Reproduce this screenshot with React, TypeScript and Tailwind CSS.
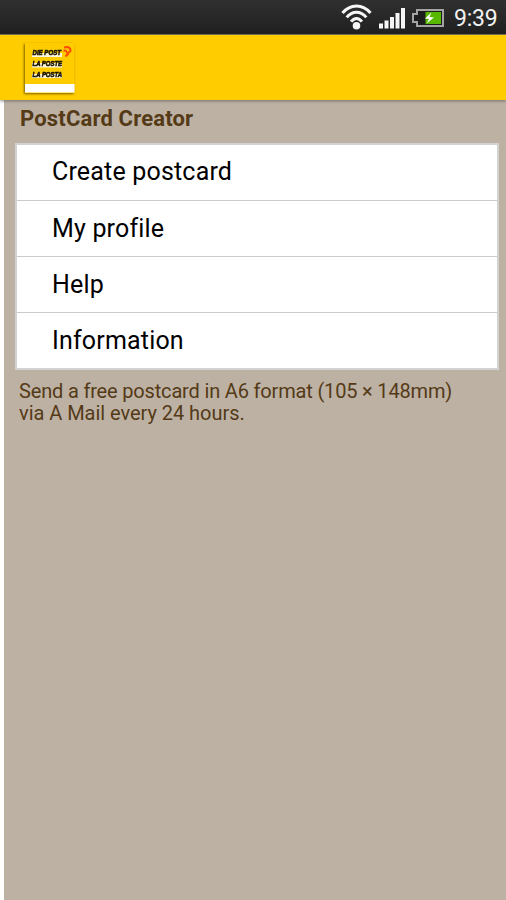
import { clsx } from "clsx";

const menuItems = ["Create postcard", "My profile", "Help", "Information"];

function WifiIcon() {
    return (
        <svg width="32" height="26" viewBox="0 0 32 26" fill="none" stroke="#f6f6f6" strokeWidth="3">
            <path d="M1.5 9C9.3 -0.4 21.7 -0.4 29.5 9" />
            <path d="M5.7 13.4C11.3 6.5 19.7 6.5 25.3 13.4" />
            <path d="M10.1 17.7C13.3 13.3 17.7 13.3 20.9 17.7" />
            <circle cx="15.5" cy="21.8" r="3.8" fill="#f6f6f6" stroke="none" />
        </svg>
    );
}

function SignalIcon() {
    return (
        <svg width="26" height="22" viewBox="0 0 26 22" fill="#f6f6f6">
            <rect x="0" y="16.5" width="4" height="5" />
            <rect x="5.5" y="13.5" width="4" height="8" />
            <rect x="11" y="10" width="4" height="11.5" />
            <rect x="16.5" y="6" width="4" height="15.5" />
            <rect x="22" y="1" width="4" height="20.5" />
        </svg>
    );
}

function BatteryIcon() {
    return (
        <svg width="32" height="18" viewBox="0 0 32 18">
            <path d="M5 1H31V17H5V13H1V5H5Z" fill="#1d1d1d" stroke="#a3a3a3" strokeWidth="2" />
            <rect x="13.5" y="3" width="15.5" height="12" fill="#58b800" />
            <path d="M19.5 3.5L13 9.5L17 10L14.5 14.5L22 8.5L17.5 8Z" fill="#fff" />
        </svg>
    );
}

function PostLogo() {
    return (
        <svg className="drop-shadow-[-1px_1px_1px_rgba(90,70,0,0.8)]" width="50" height="50" viewBox="0 0 50 50">
            <rect width="49.5" height="50" fill="#ffcc00" />
            <rect y="41" width="49.5" height="8.5" fill="#fff" />
            <g fill="#fff" opacity="0.85">
                <rect x="7" y="10" width="30" height="4" />
                <rect x="7" y="20" width="30" height="4.5" />
                <rect x="7" y="31" width="30" height="4" />
            </g>
            <g fill="#171300" stroke="#171300" strokeWidth="0.6" fontFamily="Liberation Sans, sans-serif" fontSize="7.6" fontWeight="bold" fontStyle="italic">
                <text x="7.5" y="12.3" textLength="28.5" lengthAdjust="spacingAndGlyphs">DIE POST</text>
                <text x="7.5" y="23" textLength="29.5" lengthAdjust="spacingAndGlyphs">LA POSTE</text>
                <text x="7.5" y="34" textLength="29.5" lengthAdjust="spacingAndGlyphs">LA POSTA</text>
            </g>
            <path d="M39 4.5L42.5 4Q46 5 45.5 8Q44.5 10 41 9.5M38.5 7.5L42 8M44 10L40.5 13.5" fill="none" stroke="#ff4a00" strokeWidth="1.9" />
        </svg>
    );
}

export default function App() {
    return (
        <div className="flex h-[900px] w-[506px] flex-col overflow-hidden bg-white font-[Roboto,sans-serif]">
            <header className="flex h-[35px] shrink-0 items-start border-b border-[#77705a] bg-linear-to-b from-[#303030] to-[#202020] pl-[341px]">
                <div className="mt-[4px]"><WifiIcon /></div>
                <div className="ml-[6px] mt-[7px]"><SignalIcon /></div>
                <div className="ml-[7px] mt-[9px]"><BatteryIcon /></div>
                <time className="ml-[10px] mt-[4px] text-[23px] leading-[30px] tracking-[-0.2px] text-[#f1f1f1]">9:39</time>
            </header>
            <div className="z-10 h-[65px] shrink-0 bg-[#ffcc00] pl-[25px] pt-[8px] shadow-[0_1px_3px_rgba(80,80,80,0.7)]">
                <PostLogo />
            </div>
            <main className="ml-[4px] flex-1 bg-[#bdb1a3] pl-[11px] pr-[7px] text-[#543a17]">
                <h1 className="h-[43px] pl-[5px] pt-[4px] text-[22px] leading-[30px] font-bold tracking-[0.17px]">PostCard Creator</h1>
                <ul className="border-2 border-[#d2d2d2] bg-white">
                    {menuItems.map((item, index) => (
                        <li key={item} className={clsx("flex items-center pl-[35px] text-[25px] tracking-[0.18px] text-black", index > 0 ? "h-[56px] border-t border-[#cbcbcb]" : "h-[55px] pb-[2px]")}>
                            {item}
                        </li>
                    ))}
                </ul>
                <p className="pl-[4px] pt-[10px] text-[20px] leading-[22px]">
                    <span className="block tracking-[-0.17px]">Send a free postcard in A6 format (105 × 148mm)</span>
                    <span className="block tracking-[-0.04px]">via A Mail every 24 hours.</span>
                </p>
            </main>
        </div>
    );
}
